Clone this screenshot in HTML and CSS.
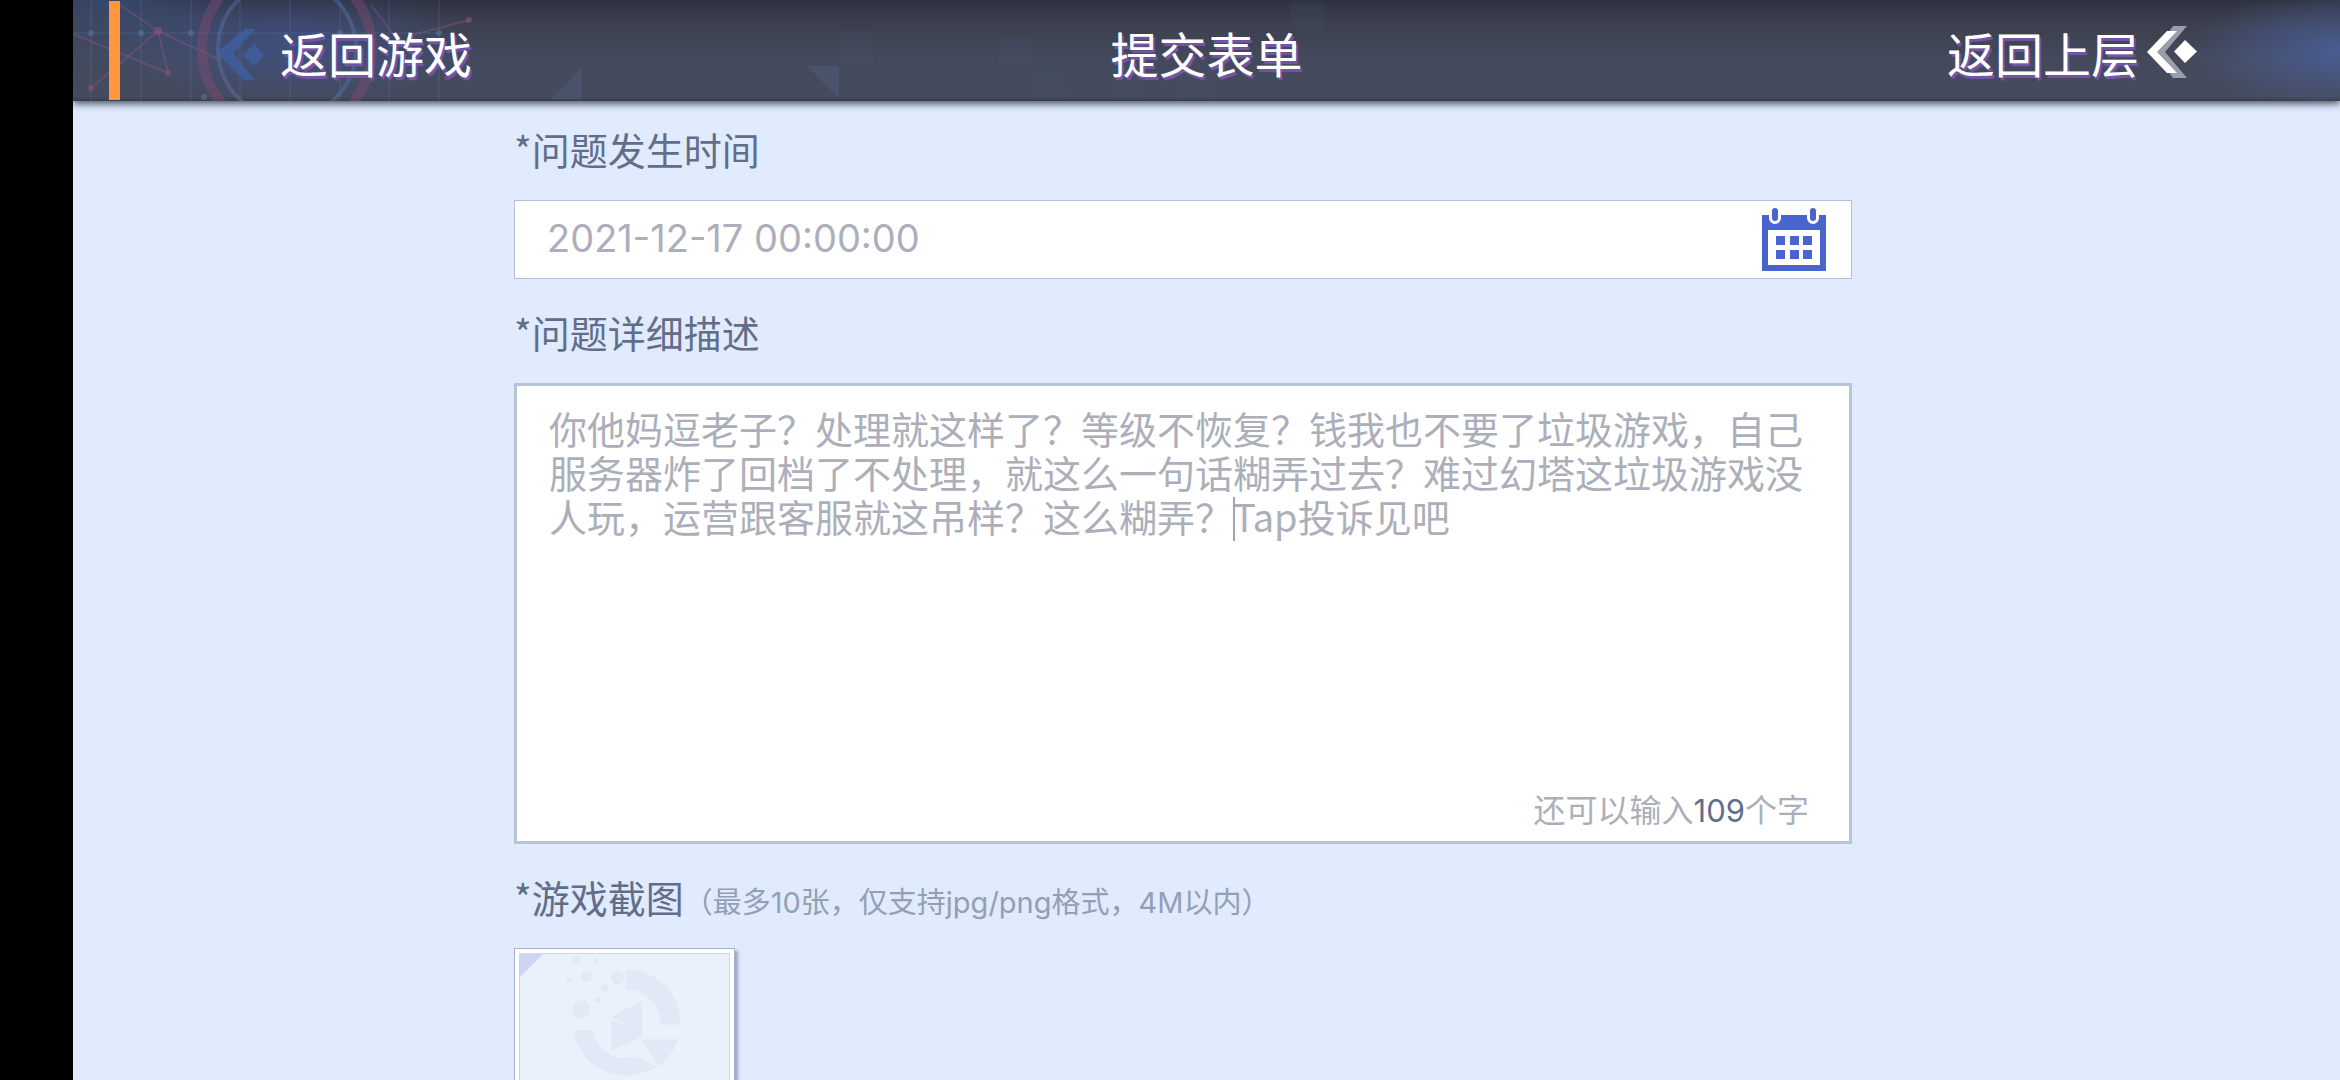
FILE: index.html
```
<!DOCTYPE html>
<html lang="zh-CN">
<head>
<meta charset="utf-8">
<meta name="viewport" content="width=device-width, initial-scale=1">
<title>提交表单</title>
<link rel="stylesheet" href="styles.css">
</head>
<body>
<div class="page">
  <header class="topbar">
    <svg class="topbar-art" viewBox="0 0 1300 101" aria-hidden="true">
      <g class="art-grid">
        <path d="M18 0V101M68 0V101M118 0V101M167 0V101M217 0V101M267 0V101M316 0V101M366 0V101M0 33H366"/>
      </g>
      <g class="art-dots">
        <circle cx="18" cy="33" r="3"/><circle cx="68" cy="33" r="3"/><circle cx="118" cy="33" r="3"/><circle cx="267" cy="33" r="3"/><circle cx="366" cy="33" r="3"/><circle cx="131" cy="97" r="3"/>
      </g>
      <circle class="art-ring-pink" cx="214" cy="49" r="85"/>
      <circle class="art-ring-blue" cx="214" cy="49" r="69"/>
      <path class="art-chevron" d="M143 53 172 29H183L160 53 182 80H171ZM170 55 181 43 191 55 181 66Z"/>
      <path class="art-links" d="M0 34 95 73M85 31 18 88M85 31 95 73M47 5 85 31 147 60M298 5 320 34M339 35 396 20"/>
      <g class="art-nodes">
        <circle cx="95" cy="73" r="3"/><circle cx="18" cy="88" r="3"/><circle cx="85" cy="31" r="4"/><circle cx="396" cy="20" r="3"/><circle cx="374" cy="77" r="3"/>
      </g>
      <path class="art-triangles" d="M478 99 509 67V99ZM734 66H766V99Z"/>
      <path class="art-squares" d="M767 31H800V63H767ZM926 34H959V68H926ZM959 68H993V100H959ZM1038 68H1071V100H1038ZM1106 68H1140V100H1106ZM1217 3H1252V30H1217Z"/>
    </svg>
    <div class="topbar-start">
      <span class="accent"></span>
      <a class="bar-link" href="#game">返回游戏</a>
    </div>
    <h1 class="bar-title">提交表单</h1>
    <a class="bar-link back-link" href="#parent">返回上层
      <svg class="back-icon" viewBox="0 0 50 52" aria-hidden="true">
        <path d="M26 0H40L18 26 40 52H26L8 26Z" fill="#9a9eaa"/>
        <path d="M20 5H30L10 26 30 47H20L0 26Z" fill="#fff"/>
        <path d="M38 14 50 25.500 38 37 27 25.500Z" fill="#fff"/>
      </svg>
    </a>
  </header>

  <main class="content">
    <form class="form">
      <div class="field">
        <label class="label" for="time">*问题发生时间</label>
        <div class="date-box">
          <input class="date-input" id="time" type="text" value="2021-12-17 00:00:00">
          <button class="date-button" type="button" aria-label="选择时间">
            <svg class="calendar" viewBox="0 0 64 63" aria-hidden="true">
              <path d="M0 7H64V63H0Z" fill="#4964cf"/>
              <path d="M6 22H58V57H6Z" fill="#fff"/>
              <path d="M14 28H23V37H14ZM28 28H37V37H28ZM41 28H50V37H41ZM14 42H23V51H14ZM28 42H37V51H28ZM41 42H50V51H41Z" fill="#4964cf"/>
              <path d="M13 2V10M51 2V10" stroke="#fff" stroke-width="12" stroke-linecap="round"/>
              <path d="M13 3V10M51 3V10" stroke="#4964cf" stroke-width="6" stroke-linecap="round"/>
            </svg>
          </button>
        </div>
      </div>

      <div class="field">
        <label class="label" for="detail">*问题详细描述</label>
        <div class="detail-box">
          <textarea class="detail-input" id="detail" spellcheck="false">你他妈逗老子？处理就这样了？等级不恢复？钱我也不要了垃圾游戏，自己服务器炸了回档了不处理，就这么一句话糊弄过去？难过幻塔这垃圾游戏没人玩，运营跟客服就这吊样？这么糊弄？Tap投诉见吧</textarea>
          <span class="caret"></span>
          <p class="counter">还可以输入<span class="count">109</span>个字</p>
        </div>
      </div>

      <div class="field">
        <div class="label">*游戏截图<span class="note">（最多10张，仅支持jpg/png格式，4M以内）</span></div>
        <button class="upload" type="button" aria-label="上传截图">
          <svg class="emblem" viewBox="58 70 631 631" aria-hidden="true">
            <path d="M58 70H128L58 140Z" fill="#cdd5f4"/>
            <g fill="#e2e9f6">
              <path d="M379 117A164 164 0 0 1 543 283H483A106 106 0 0 0 379 177Z"/>
              <path d="M218 300H276C288 355 330 384 372 384Q400 376 420 382L470 410A164 164 0 0 1 218 300Z"/>
              <path d="M428 328H536Q520 376 474 410Z"/>
              <path d="M426 210V320L333 362V268L392 293 335 260Z"/>
              <circle cx="242" cy="237" r="27"/><circle cx="353" cy="142" r="20"/><circle cx="259" cy="137" r="17"/><circle cx="313" cy="172" r="13"/><circle cx="228" cy="88" r="12"/><circle cx="286" cy="90" r="8"/><circle cx="206" cy="146" r="8"/><circle cx="293" cy="209" r="9"/>
            </g>
          </svg>
        </button>
      </div>
    </form>
  </main>
</div>
</body>
</html>
```
FILE: styles.css
```
* {
  box-sizing: border-box;
}

body {
  margin: 0;
  background: #000;
  font-family: "Noto Sans CJK SC", sans-serif;
  font-size: 38px;
  line-height: 44px;
  color: #626e89;
}

.page {
  display: flex;
  flex-direction: column;
  height: 100vh;
  margin-left: 73px;
  overflow: hidden;
  background: #e0ebfe;
}

/* Top bar */
.topbar {
  position: relative;
  z-index: 1;
  display: grid;
  grid-template-columns: 1fr auto 1fr;
  align-items: center;
  flex: none;
  height: 101px;
  background:
    radial-gradient(ellipse 150px 60px at 100% 50px, rgba(75, 98, 160, 0.8), transparent),
    radial-gradient(ellipse 190px 60px at 217px 42px, rgba(62, 86, 155, 0.6), transparent),
    radial-gradient(ellipse 140px 70px at 40px 0, rgba(60, 86, 135, 0.6), transparent),
    linear-gradient(#2f3240, #3b3e4c 20%, #444a5c 60%, #454a5e 96%, #383c4b);
  box-shadow: 0 3px 7px rgba(30, 38, 48, 0.75);
}

.topbar-art {
  position: absolute;
  top: 0;
  left: 0;
  width: 1300px;
  height: 101px;
  fill: none;
}

.art-grid { stroke: #6a80b0; stroke-width: 2; opacity: 0.15; }
.art-dots { fill: #6a84bc; opacity: 0.4; }
.art-ring-pink { stroke: #8a4a70; stroke-width: 10; opacity: 0.4; }
.art-ring-blue { stroke: #5a7aae; stroke-width: 4; opacity: 0.4; }
.art-chevron { fill: #3e66b0; opacity: 0.6; }
.art-links { stroke: #84547e; stroke-width: 2; opacity: 0.45; }
.art-nodes { fill: #8a4f7c; opacity: 0.65; }
.art-triangles { fill: #4d5a75; opacity: 0.6; }
.art-squares { fill: #4d5a75; opacity: 0.15; }

.topbar-start {
  position: relative;
  display: flex;
  align-items: center;
  gap: 160px;
  padding-left: 36px;
}

.accent {
  width: 11px;
  height: 99px;
  background: #ff9640;
}

.bar-link,
.bar-title {
  position: relative;
  margin: 0;
  padding-top: 2px;
  font-size: 48px;
  font-weight: 400;
  line-height: 56px;
  color: #fff;
  text-decoration: none;
  text-shadow: 2px 3px 1px #7555a8;
}

.back-link {
  display: flex;
  align-items: center;
  justify-self: end;
  gap: 8px;
  margin-right: 143px;
}

.back-icon {
  width: 50px;
  height: 52px;
}

/* Form */
.content {
  display: grid;
  grid-template-columns: 441fr 1338fr 488fr;
  padding-top: 26px;
}

.form {
  grid-column: 2;
  display: flex;
  flex-direction: column;
  gap: 31px;
}

.field {
  display: flex;
  flex-direction: column;
  gap: 29px;
}

.label {
  height: 44px;
}

.date-box {
  display: flex;
  align-items: center;
  height: 79px;
  padding: 0 25px 0 32px;
  background: #fff;
  border: 1px solid #b3c0d4;
}

.date-input {
  flex: 1;
  min-width: 0;
  height: 76px;
  padding: 0 0 3px;
  border: 0;
  outline: 0;
  background: none;
  font-family: Inter, sans-serif;
  font-size: 38px;
  font-weight: 400;
  color: #acaebb;
}

.date-button {
  padding: 0 0 1px;
  border: 0;
  background: none;
}

.calendar {
  display: block;
  width: 64px;
  height: 63px;
}

.detail-box {
  position: relative;
  display: flex;
  flex-direction: column;
  height: 461px;
  padding: 20px 32px 8px;
  background: #fff;
  border: 3px solid #b7c4d8;
}

.detail-input {
  flex: 1;
  padding: 0;
  border: 0;
  outline: 0;
  resize: none;
  overflow: hidden;
  background: none;
  font: inherit;
  color: #acafba;
}

.caret {
  position: absolute;
  top: 111px;
  left: 716px;
  width: 2px;
  height: 44px;
  background: #a0a5b4;
}

.counter {
  margin: 0;
  padding-right: 8px;
  font-size: 32px;
  text-align: right;
  color: #acafba;
}

.count {
  font-family: Inter, sans-serif;
  font-size: 31px;
  color: #626e89;
}

.note {
  font-family: Inter, "Noto Sans CJK SC", sans-serif;
  font-size: 29px;
  color: #929fb5;
}

.upload {
  width: 221px;
  height: 221px;
  padding: 4px;
  background: #fff;
  border: 1px solid #a9b1d0;
  box-shadow: 3px 3px 3px rgba(110, 120, 155, 0.6);
}

.emblem {
  display: block;
  width: 100%;
  height: 100%;
  background: #eaf1fb;
  border: 1px solid #cfd7ee;
}
```
